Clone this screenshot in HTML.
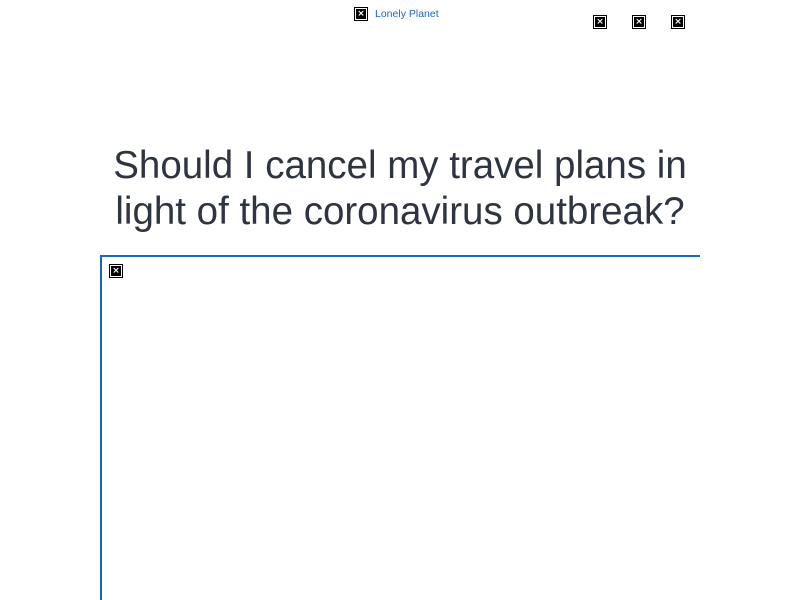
<!DOCTYPE html>
<html><head><style>
html,body{margin:0;padding:0;background:#fff;width:800px;height:600px;overflow:hidden;position:relative;font-family:"Liberation Sans",sans-serif}
.ic{position:absolute;width:14px;height:14px;box-sizing:border-box;border:1px solid #000;background:#fff;padding:1px}
.ic div{width:10px;height:10px;background:#000;color:#fff;font:bold 9px/10px "DejaVu Sans",sans-serif;text-align:center}
h1{position:absolute;left:0;top:143px;width:800px;margin:0;text-align:center;font-weight:normal;font-size:38.5px;line-height:46px;color:#2e3440}
.box{position:absolute;left:100px;top:255px;width:598px;height:360px;border-top:2px solid #1a66c2;border-left:2px solid #1a66c2}
</style></head><body>
<div class="ic" style="left:354px;top:7px"><div>×</div></div>
<span style="position:absolute;left:375px;top:8px;font-size:10.5px;color:#1a66c2">Lonely Planet</span>
<div class="ic" style="left:593px;top:15px"><div>×</div></div>
<div class="ic" style="left:632px;top:15px"><div>×</div></div>
<div class="ic" style="left:671px;top:15px"><div>×</div></div>
<h1>Should I cancel my travel plans in<br>light of the coronavirus outbreak?</h1>
<div class="box"></div>
<div class="ic" style="left:109px;top:264px"><div>×</div></div>
</body></html>
